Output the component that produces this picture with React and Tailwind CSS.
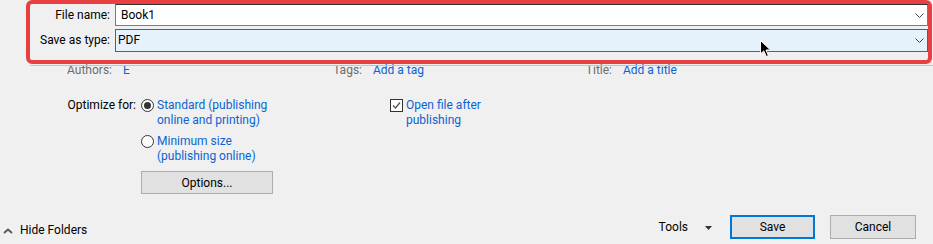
import React from 'react';

// --- small drawings ---
const Chevron = () => (
  <svg width="9" height="5" viewBox="0 0 9 5" className="shrink-0">
    <path d="M0.5 0.5 L4.5 4.5 L8.5 0.5" fill="none" stroke="#444" strokeWidth="1" />
  </svg>
);

const Radio = ({ checked }) => (
  <div className="w-[13px] h-[13px] rounded-full border border-[#333] bg-white flex items-center justify-center shrink-0">
    {checked && <div className="w-[7px] h-[7px] rounded-full bg-[#333]" />}
  </div>
);

const Field = ({ label, value, active }) => (
  <div className="flex items-center">
    <div className="w-[85px] text-right pr-[5px] text-black">{label}</div>
    <div
      className={
        active
          ? 'flex-1 h-[23px] border border-[#0078d7] bg-[#e5f1fb] flex items-center pl-[2px] pr-[3px]'
          : 'flex-1 h-[22px] border border-[#7a7a7a] border-t-[#333] bg-white flex items-center pl-[5px] pr-[3px]'
      }
    >
      <span className="flex-1">{value}</span>
      <Chevron />
    </div>
  </div>
);

const Meta = ({ label, value, width }) => (
  <div className="flex" style={{ width }}>
    <div className="w-[112px] text-right text-[#6d6d6d]">{label}</div>
    <div className="ml-[11px] text-[#0a64d2]">{value}</div>
  </div>
);

export default function App() {
  return (
    <div
      className="relative w-[933px] h-[244px] overflow-hidden bg-[#f0f0f0] text-[12px] leading-[15px] text-black"
      style={{ fontFamily: 'Roboto, "Noto Sans", sans-serif' }}
    >
      {/* File name / type box */}
      <div className="relative z-10 ml-[26px] w-[906px] h-[64px] border-4 border-[#e84040] rounded-[6px] flex flex-col gap-[3px]">
        <Field label="File name:" value="Book1" />
        <Field label="Save as type:" value="PDF" active />
      </div>

      {/* Authors / Tags / Title row, partly under the box */}
      <div className="relative -mt-[2px] h-[16px] leading-[16px] flex">
        <div className="absolute left-[30px] right-0 top-[3px] h-px bg-[#c4c4c4]" />
        <Meta label="Authors:" value="E" width="250px" />
        <Meta label="Tags:" value="Add a tag" width="250px" />
        <Meta label="Title:" value="Add a title" width="300px" />
      </div>

      {/* Optimize section */}
      <div className="mt-[20px] flex">
        <div className="w-[136px] text-right">Optimize for:</div>
        <div className="ml-[5px] w-[249px] flex flex-col">
          <div className="flex items-start">
            <div className="mt-[1px]"><Radio checked /></div>
            <div className="ml-[3px] text-[#0a64d2]">
              <div>Standard (publishing</div>
              <div>online and printing)</div>
            </div>
          </div>
          <div className="flex items-start mt-[6px]">
            <div className="mt-[1px]"><Radio /></div>
            <div className="ml-[3px] text-[#0a64d2]">
              <div>Minimum size</div>
              <div>(publishing online)</div>
            </div>
          </div>
          <button className="mt-[7px] w-[132px] h-[23px] bg-[#e1e1e1] border border-[#adadad] text-black leading-none">
            Options...
          </button>
        </div>
        <div className="flex items-start">
          <div className="mt-[1px] w-[13px] h-[13px] border border-[#333] bg-white flex items-center justify-center">
            <svg width="11" height="11" viewBox="0 0 11 11">
              <path d="M2 5.5 L4.5 8 L9 2.5" fill="none" stroke="#555" strokeWidth="1.3" />
            </svg>
          </div>
          <div className="ml-[3px] text-[#0a64d2]">
            <div>Open file after</div>
            <div>publishing</div>
          </div>
        </div>
      </div>

      {/* Bottom bar */}
      <div className="mt-[21px] flex items-start">
        <div className="flex items-center mt-[8px] ml-[3px]">
          <svg width="10" height="6" viewBox="0 0 10 6">
            <path d="M1 5 L5 1.5 L9 5" fill="none" stroke="#555" strokeWidth="1.8" />
          </svg>
          <span className="ml-[7px]">Hide Folders</span>
        </div>
        <div className="flex-1" />
        <div className="flex items-center mt-[5px]">
          <span>Tools</span>
          <svg width="7" height="4" viewBox="0 0 7 4" className="ml-[17px]">
            <path d="M0 0 H7 L3.5 4 Z" fill="#333" />
          </svg>
        </div>
        <button className="ml-[18px] w-[85px] h-[24px] bg-[#e1e1e1] border-2 border-[#0078d7] leading-none">
          Save
        </button>
        <button className="ml-[15px] mr-[17px] w-[86px] h-[24px] bg-[#e1e1e1] border border-[#adadad] leading-none">
          Cancel
        </button>
      </div>

      {/* mouse pointer */}
      <svg width="12" height="19" viewBox="0 0 12 19" className="absolute left-[760px] top-[40px] z-20">
        <path d="M0.5 0.5 V14 L3.8 10.8 L6.3 16.5 L8.4 15.6 L6 10 H10.5 Z" fill="#000" stroke="#fff" strokeWidth="1" />
      </svg>
    </div>
  );
}
